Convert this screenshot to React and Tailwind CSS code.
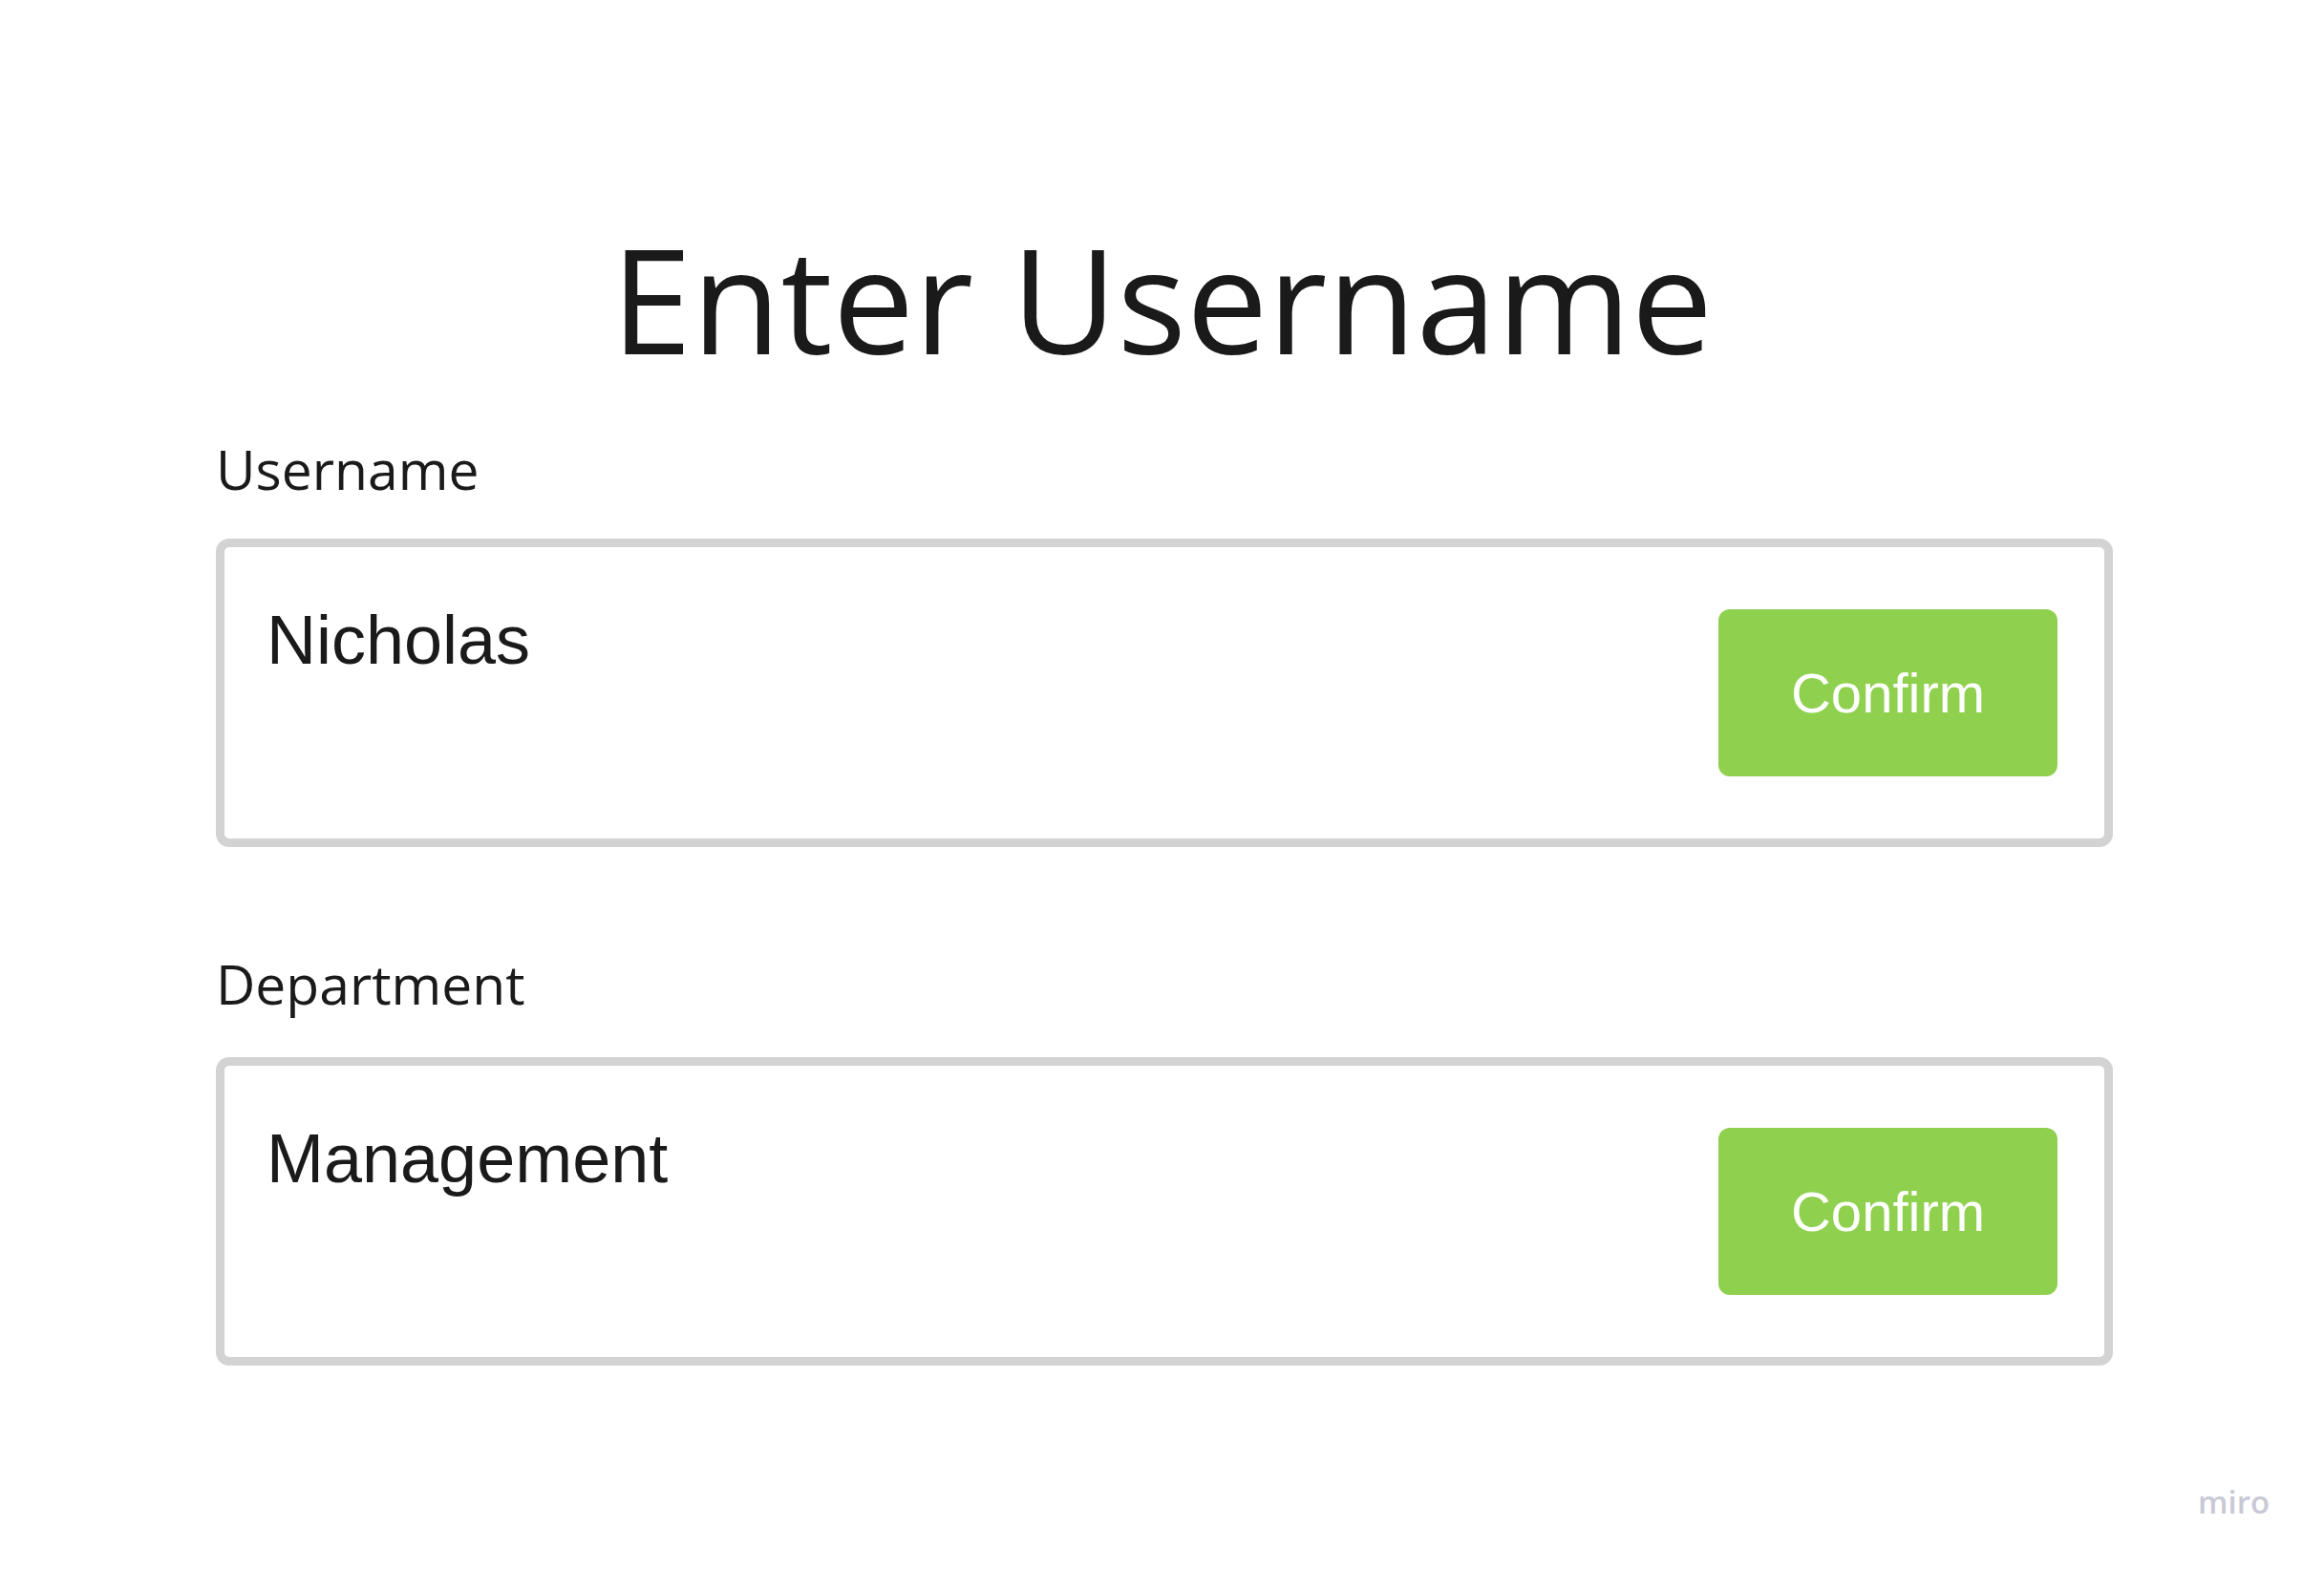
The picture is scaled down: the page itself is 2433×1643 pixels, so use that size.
import React from 'react';

const FieldBox = ({ value }) => {
  return (
    <div className="flex h-[323px] w-[1986px] items-center justify-between rounded-[14px] border-[9px] border-[#d3d3d3] bg-white pl-[44px] pr-[49px]">
      <div className="self-start pt-[61px] font-['Liberation_Sans',Arial,sans-serif] text-[72px] leading-none text-[#1a1a1a]">
        {value}
      </div>
      <button className="flex h-[175px] w-[355px] items-center justify-center rounded-[12px] bg-[#8fd14f] font-['Liberation_Sans',Arial,sans-serif] text-[58px] leading-none text-white">
        Confirm
      </button>
    </div>
  );
};

const App = () => {
  return (
    <div className="relative h-[1643px] w-full bg-white font-['Open_Sans',sans-serif] text-[#1a1a1a]">
      <h1 className="pt-[237px] text-center text-[152px] leading-none font-normal">
        Enter Username
      </h1>

      <div className="ml-[226px] flex w-[1986px] flex-col">
        <label className="mt-[74px] text-[57px] leading-none">Username</label>
        <div className="mt-[44px]">
          <FieldBox value="Nicholas" />
        </div>

        <label className="mt-[115px] text-[57px] leading-none">Department</label>
        <div className="mt-[48px]">
          <FieldBox value="Management" />
        </div>
      </div>

      {/* watermark */}
      <div className="absolute left-[2301px] top-[1556px] text-[33px] font-semibold leading-none text-[#c9c9d6]">
        miro
      </div>
    </div>
  );
};

export default App;
